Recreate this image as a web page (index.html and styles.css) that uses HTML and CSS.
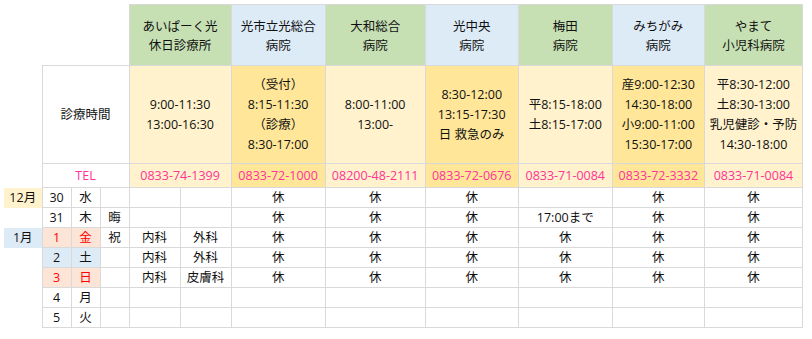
FILE: index.html
```html
<!DOCTYPE html>
<html lang="ja">
<head>
<meta charset="utf-8">
<title>年末年始 診療表</title>
<link rel="stylesheet" href="styles.css">
</head>
<body>
<table class="sched">
  <colgroup>
    <col class="c-month"><col class="c-date"><col class="c-wd"><col class="c-note">
    <col class="c-h1"><col class="c-h1">
    <col class="c-h2"><col class="c-h3"><col class="c-h4"><col class="c-h5"><col class="c-h6"><col class="c-h7">
  </colgroup>
  <tr class="r-head">
    <td colspan="4" class="blank"></td>
    <th colspan="2" class="green">あいぱーく光<br>休日診療所</th>
    <th class="blue">光市立光総合<br>病院</th>
    <th class="green">大和総合<br>病院</th>
    <th class="blue">光中央<br>病院</th>
    <th class="green">梅田<br>病院</th>
    <th class="blue">みちがみ<br>病院</th>
    <th class="green">やまて<br>小児科病院</th>
  </tr>
  <tr class="r-hours">
    <td class="blank"></td>
    <td colspan="3">診療時間</td>
    <td colspan="2" class="y1">9:00-11:30<br>13:00-16:30</td>
    <td class="y2">（受付）<br>8:15-11:30<br>（診療）<br>8:30-17:00</td>
    <td class="y1">8:00-11:00<br>13:00-</td>
    <td class="y2">8:30-12:00<br>13:15-17:30<br>日 救急のみ</td>
    <td class="y1">平8:15-18:00<br>土8:15-17:00</td>
    <td class="y2">産9:00-12:30<br>14:30-18:00<br>小9:00-11:00<br>15:30-17:00</td>
    <td class="y1">平8:30-12:00<br>土8:30-13:00<br>乳児健診・予防<br>14:30-18:00</td>
  </tr>
  <tr class="r-tel">
    <td class="blank"></td>
    <td colspan="3" class="tel">TEL</td>
    <td colspan="2" class="y1 tel">0833-74-1399</td>
    <td class="y2 tel">0833-72-1000</td>
    <td class="y1 tel">08200-48-2111</td>
    <td class="y2 tel">0833-72-0676</td>
    <td class="y1 tel">0833-71-0084</td>
    <td class="y2 tel">0833-72-3332</td>
    <td class="y1 tel">0833-71-0084</td>
  </tr>
  <tr class="r-day">
    <td class="month m-dec">12月</td><td>30</td><td>水</td><td></td>
    <td></td><td></td><td>休</td><td>休</td><td>休</td><td></td><td>休</td><td>休</td>
  </tr>
  <tr class="r-day">
    <td class="month"></td><td>31</td><td>木</td><td>晦</td>
    <td></td><td></td><td>休</td><td>休</td><td>休</td><td>17:00まで</td><td>休</td><td>休</td>
  </tr>
  <tr class="r-day">
    <td class="month m-jan">1月</td><td class="hol">1</td><td class="hol">金</td><td>祝</td>
    <td>内科</td><td>外科</td><td>休</td><td>休</td><td>休</td><td>休</td><td>休</td><td>休</td>
  </tr>
  <tr class="r-day">
    <td class="month"></td><td class="sat">2</td><td class="sat">土</td><td></td>
    <td>内科</td><td>外科</td><td>休</td><td>休</td><td>休</td><td>休</td><td>休</td><td>休</td>
  </tr>
  <tr class="r-day">
    <td class="month"></td><td class="hol">3</td><td class="hol">日</td><td></td>
    <td>内科</td><td>皮膚科</td><td>休</td><td>休</td><td>休</td><td>休</td><td>休</td><td>休</td>
  </tr>
  <tr class="r-day">
    <td class="month"></td><td>4</td><td>月</td><td></td>
    <td></td><td></td><td></td><td></td><td></td><td></td><td></td><td></td>
  </tr>
  <tr class="r-day">
    <td class="month"></td><td>5</td><td>火</td><td></td>
    <td></td><td></td><td></td><td></td><td></td><td></td><td></td><td></td>
  </tr>
</table>
</body>
</html>
```

FILE: styles.css
```css
html, body {
  margin: 0;
  padding: 0;
  background: #ffffff;
}
body {
  padding: 4px;
  font-family: "Open Sans", "Noto Sans CJK JP", sans-serif;
  font-size: 12.5px;
  color: #111111;
}
.sched {
  border-collapse: collapse;
  table-layout: fixed;
  width: 799px;
}
.c-month { width: 38px; }
.c-date, .c-wd, .c-note { width: 29px; }
.c-h1 { width: 51px; }
.c-h2 { width: 94px; }
.c-h3 { width: 100px; }
.c-h4 { width: 93px; }
.c-h5 { width: 94px; }
.c-h6 { width: 92px; }
.c-h7 { width: 98px; }

.sched th, .sched td {
  border: 1px solid #d9d9d9;
  padding: 0;
  text-align: center;
  vertical-align: middle;
  font-weight: normal;
  line-height: 18px;
  white-space: nowrap;
  overflow: hidden;
}
.r-hours td { line-height: 20px; }
.sched td.blank, .sched td.month {
  border: none;
}
.r-head { height: 61px; }
.r-hours { height: 98px; }
.r-tel { height: 24px; }
.r-day { height: 20px; }
.r-head th { line-height: 19px; padding-top: 1px; }

.green { background: #c6e0b4; }
.blue { background: #ddebf7; }
.y1 { background: #fff2cc; }
.y2 { background: #ffe699; }
.tel { color: #ff3399; }
.m-dec { background: #fff2cc; }
.m-jan { background: #ddebf7; }
.hol { background: #fce4d6; color: #ff0000; }
.sat { background: #ddebf7; }
```
